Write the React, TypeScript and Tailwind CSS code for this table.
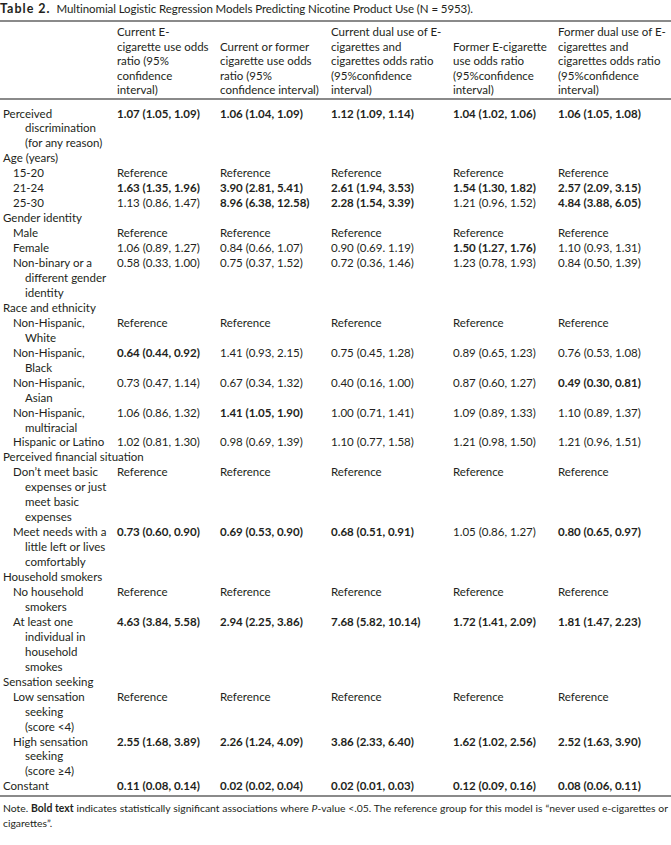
type Cell = [string, boolean];

interface Row {
  label: string[];
  level: 0 | 1;
  cells?: Cell[];
}

const REF: Cell[] = [
  ['Reference', false],
  ['Reference', false],
  ['Reference', false],
  ['Reference', false],
  ['Reference', false],
];

const headers: string[][] = [
  ['Current E-', 'cigarette use odds', 'ratio (95%', 'confidence', 'interval)'],
  ['Current or former', 'cigarette use odds', 'ratio (95%', 'confidence interval)'],
  ['Current dual use of E-', 'cigarettes and', 'cigarettes odds ratio', '(95%confidence', 'interval)'],
  ['Former E-cigarette', 'use odds ratio', '(95%confidence', 'interval)'],
  ['Former dual use of E-', 'cigarettes and', 'cigarettes odds ratio', '(95%confidence', 'interval)'],
];

const rows: Row[] = [
  {
    label: ['Perceived', 'discrimination', '(for any reason)'],
    level: 0,
    cells: [
      ['1.07 (1.05, 1.09)', true],
      ['1.06 (1.04, 1.09)', true],
      ['1.12 (1.09, 1.14)', true],
      ['1.04 (1.02, 1.06)', true],
      ['1.06 (1.05, 1.08)', true],
    ],
  },
  { label: ['Age (years)'], level: 0 },
  { label: ['15-20'], level: 1, cells: REF },
  {
    label: ['21-24'],
    level: 1,
    cells: [
      ['1.63 (1.35, 1.96)', true],
      ['3.90 (2.81, 5.41)', true],
      ['2.61 (1.94, 3.53)', true],
      ['1.54 (1.30, 1.82)', true],
      ['2.57 (2.09, 3.15)', true],
    ],
  },
  {
    label: ['25-30'],
    level: 1,
    cells: [
      ['1.13 (0.86, 1.47)', false],
      ['8.96 (6.38, 12.58)', true],
      ['2.28 (1.54, 3.39)', true],
      ['1.21 (0.96, 1.52)', false],
      ['4.84 (3.88, 6.05)', true],
    ],
  },
  { label: ['Gender identity'], level: 0 },
  { label: ['Male'], level: 1, cells: REF },
  {
    label: ['Female'],
    level: 1,
    cells: [
      ['1.06 (0.89, 1.27)', false],
      ['0.84 (0.66, 1.07)', false],
      ['0.90 (0.69. 1.19)', false],
      ['1.50 (1.27, 1.76)', true],
      ['1.10 (0.93, 1.31)', false],
    ],
  },
  {
    label: ['Non-binary or a', 'different gender', 'identity'],
    level: 1,
    cells: [
      ['0.58 (0.33, 1.00)', false],
      ['0.75 (0.37, 1.52)', false],
      ['0.72 (0.36, 1.46)', false],
      ['1.23 (0.78, 1.93)', false],
      ['0.84 (0.50, 1.39)', false],
    ],
  },
  { label: ['Race and ethnicity'], level: 0 },
  { label: ['Non-Hispanic,', 'White'], level: 1, cells: REF },
  {
    label: ['Non-Hispanic,', 'Black'],
    level: 1,
    cells: [
      ['0.64 (0.44, 0.92)', true],
      ['1.41 (0.93, 2.15)', false],
      ['0.75 (0.45, 1.28)', false],
      ['0.89 (0.65, 1.23)', false],
      ['0.76 (0.53, 1.08)', false],
    ],
  },
  {
    label: ['Non-Hispanic,', 'Asian'],
    level: 1,
    cells: [
      ['0.73 (0.47, 1.14)', false],
      ['0.67 (0.34, 1.32)', false],
      ['0.40 (0.16, 1.00)', false],
      ['0.87 (0.60, 1.27)', false],
      ['0.49 (0.30, 0.81)', true],
    ],
  },
  {
    label: ['Non-Hispanic,', 'multiracial'],
    level: 1,
    cells: [
      ['1.06 (0.86, 1.32)', false],
      ['1.41 (1.05, 1.90)', true],
      ['1.00 (0.71, 1.41)', false],
      ['1.09 (0.89, 1.33)', false],
      ['1.10 (0.89, 1.37)', false],
    ],
  },
  {
    label: ['Hispanic or Latino'],
    level: 1,
    cells: [
      ['1.02 (0.81, 1.30)', false],
      ['0.98 (0.69, 1.39)', false],
      ['1.10 (0.77, 1.58)', false],
      ['1.21 (0.98, 1.50)', false],
      ['1.21 (0.96, 1.51)', false],
    ],
  },
  { label: ['Perceived financial situation'], level: 0 },
  {
    label: ['Don\u2019t meet basic', 'expenses or just', 'meet basic', 'expenses'],
    level: 1,
    cells: REF,
  },
  {
    label: ['Meet needs with a', 'little left or lives', 'comfortably'],
    level: 1,
    cells: [
      ['0.73 (0.60, 0.90)', true],
      ['0.69 (0.53, 0.90)', true],
      ['0.68 (0.51, 0.91)', true],
      ['1.05 (0.86, 1.27)', false],
      ['0.80 (0.65, 0.97)', true],
    ],
  },
  { label: ['Household smokers'], level: 0 },
  { label: ['No household', 'smokers'], level: 1, cells: REF },
  {
    label: ['At least one', 'individual in', 'household', 'smokes'],
    level: 1,
    cells: [
      ['4.63 (3.84, 5.58)', true],
      ['2.94 (2.25, 3.86)', true],
      ['7.68 (5.82, 10.14)', true],
      ['1.72 (1.41, 2.09)', true],
      ['1.81 (1.47, 2.23)', true],
    ],
  },
  { label: ['Sensation seeking'], level: 0 },
  { label: ['Low sensation', 'seeking', '(score <4)'], level: 1, cells: REF },
  {
    label: ['High sensation', 'seeking', '(score \u22654)'],
    level: 1,
    cells: [
      ['2.55 (1.68, 3.89)', true],
      ['2.26 (1.24, 4.09)', true],
      ['3.86 (2.33, 6.40)', true],
      ['1.62 (1.02, 2.56)', true],
      ['2.52 (1.63, 3.90)', true],
    ],
  },
  {
    label: ['Constant'],
    level: 0,
    cells: [
      ['0.11 (0.08, 0.14)', true],
      ['0.02 (0.02, 0.04)', true],
      ['0.02 (0.01, 0.03)', true],
      ['0.12 (0.09, 0.16)', true],
      ['0.08 (0.06, 0.11)', true],
    ],
  },
];

function Label({ row }: { row: Row }) {
  return (
    <div className={row.level === 1 ? 'pl-[10px]' : ''}>
      {row.label.map((line, i) => (
        <div
          key={i}
          className={`whitespace-nowrap ${i > 0 ? (row.level === 1 ? 'pl-[12px]' : 'pl-[22px]') : ''}`}
        >
          {line}
        </div>
      ))}
    </div>
  );
}

export default function App() {
  return (
    <div className="w-[671px] bg-white text-[#231f20] font-['Lato','Liberation_Sans',sans-serif] text-[11.5px]">
      {/* Caption */}
      <div className="h-[20px] pt-[1px] leading-[15px] whitespace-nowrap">
        <span className="font-bold text-[12.5px] tracking-[1px] mr-[3px]">Table 2.</span>{' '}
        <span className="tracking-[-0.08px]">
          Multinomial Logistic Regression Models Predicting Nicotine Product Use (N = 5953).
        </span>
      </div>

      <table className="w-full table-fixed border-collapse">
        <colgroup>
          <col className="w-[117px]" />
          <col className="w-[103px]" />
          <col className="w-[111px]" />
          <col className="w-[122px]" />
          <col className="w-[105px]" />
          <col />
        </colgroup>
        <thead>
          <tr className="border-t-2 border-b-2 border-[#8a8a8a] leading-[14.5px]">
            <th className="p-0" />
            {headers.map((lines, i) => (
              <th key={i} className="p-0 pt-[3px] align-bottom text-left font-normal">
                {lines.map((l, j) => (
                  <div key={j} className="whitespace-nowrap">
                    {l}
                  </div>
                ))}
              </th>
            ))}
          </tr>
        </thead>
        <tbody className="leading-[14.95px]">
          {rows.map((row, i) => (
            <tr key={i}>
              <td
                className={`p-0 pl-[3px] align-top ${i === 0 ? 'pt-[7px]' : ''} ${
                  i === rows.length - 1 ? 'pb-[1px]' : ''
                }`}
              >
                <Label row={row} />
              </td>
              {row.cells
                ? row.cells.map(([text, bold], j) => (
                    <td
                      key={j}
                      className={`p-0 align-top whitespace-nowrap ${bold ? 'font-bold' : ''} ${
                        i === 0 ? 'pt-[7px]' : ''
                      }`}
                    >
                      {text}
                    </td>
                  ))
                : [0, 1, 2, 3, 4].map((j) => <td key={j} className="p-0" />)}
            </tr>
          ))}
        </tbody>
      </table>

      {/* Note */}
      <div className="border-t-2 border-[#8a8a8a] pt-[4px] pl-[3px] pr-[3px] text-[10.4px] leading-[15px]">
        <div className="text-justify [text-align-last:justify] whitespace-nowrap">
          Note. <span className="font-bold">Bold text</span> indicates statistically significant associations where{' '}
          <span className="italic">P</span>-value &lt;.05. The reference group for this model is {'\u201c'}never used
          e-cigarettes or
        </div>
        <div>cigarettes{'\u201d'}.</div>
      </div>
    </div>
  );
}
